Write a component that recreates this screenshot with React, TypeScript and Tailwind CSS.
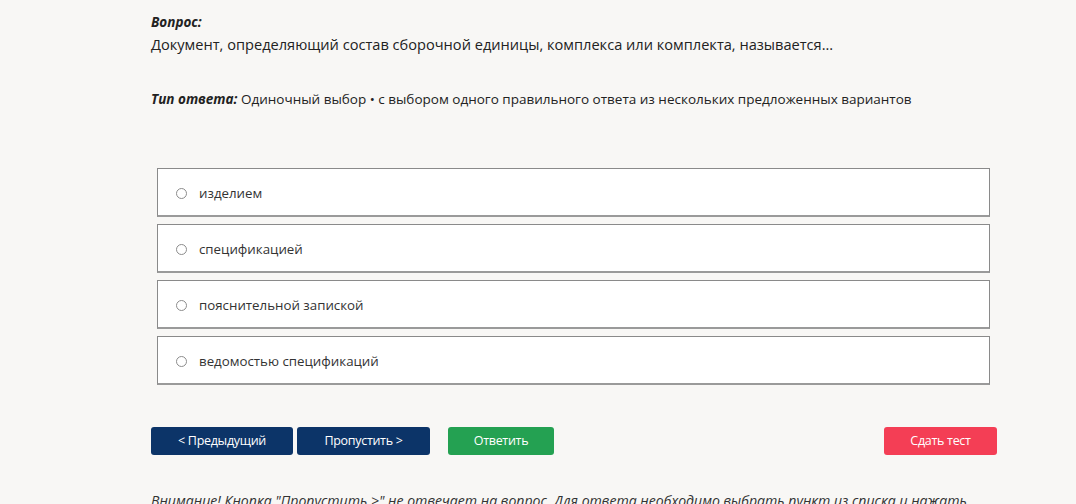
const options = [
  "изделием",
  "спецификацией",
  "пояснительной запиской",
  "ведомостью спецификаций",
];

export default function App() {
  return (
    <div className="w-[1076px] h-[504px] overflow-hidden bg-[#f8f7f5] text-[#222] font-['Open_Sans',sans-serif]">
      <div className="ml-[151px] w-[846px] pt-[12px]">
        {/* Question */}
        <p className="text-[13.5px] leading-[20px] font-bold italic text-[#222]">Вопрос:</p>
        <p className="text-[14.6px] leading-[24px]">
          Документ, определяющий состав сборочной единицы, комплекса или комплекта, называется...
        </p>

        <p className="text-[13.5px] leading-[20px] mt-[33px]">
          <span className="font-bold italic">Тип ответа:</span> Одиночный выбор • с выбором одного правильного ответа из нескольких предложенных вариантов
        </p>

        {/* Options */}
        <div className="mt-[59px] ml-[6px] mr-[7px] flex flex-col gap-[7px]">
          {options.map((o) => (
            <label
              key={o}
              className="h-[49px] flex items-center bg-white border border-[#8a8a8a] border-b-2 border-b-[#9a9a9a] px-[18px] pt-[3px] gap-[12px] cursor-pointer"
            >
              <span className="w-[11px] h-[11px] rounded-full border border-[#8c8c8c] bg-white" />
              <span className="text-[13.3px] text-[#333]">{o}</span>
            </label>
          ))}
        </div>

        {/* Buttons */}
        <div className="mt-[42px] flex items-center">
          <button className="w-[142px] h-[28px] rounded-[3px] bg-[#0c3468] text-white text-[12.5px] tracking-[-0.3px]">
            &lt; Предыдущий
          </button>
          <button className="ml-[4px] w-[133px] h-[28px] rounded-[3px] bg-[#0c3468] text-white text-[12.5px] tracking-[-0.3px]">
            Пропустить &gt;
          </button>
          <button className="ml-[18px] w-[106px] h-[28px] rounded-[3px] bg-[#24a152] text-white text-[12.5px] tracking-[-0.3px]">
            Ответить
          </button>
          <button className="ml-auto w-[113px] h-[28px] rounded-[3px] bg-[#f43e55] text-white text-[12.5px] tracking-[-0.3px]">
            Сдать тест
          </button>
        </div>

        <p className="mt-[36px] text-[14.1px] leading-[20px] italic text-[#333] whitespace-nowrap">
          Внимание! Кнопка "Пропустить &gt;" не отвечает на вопрос. Для ответа необходимо выбрать пункт из списка и нажать
        </p>
      </div>
    </div>
  );
}
